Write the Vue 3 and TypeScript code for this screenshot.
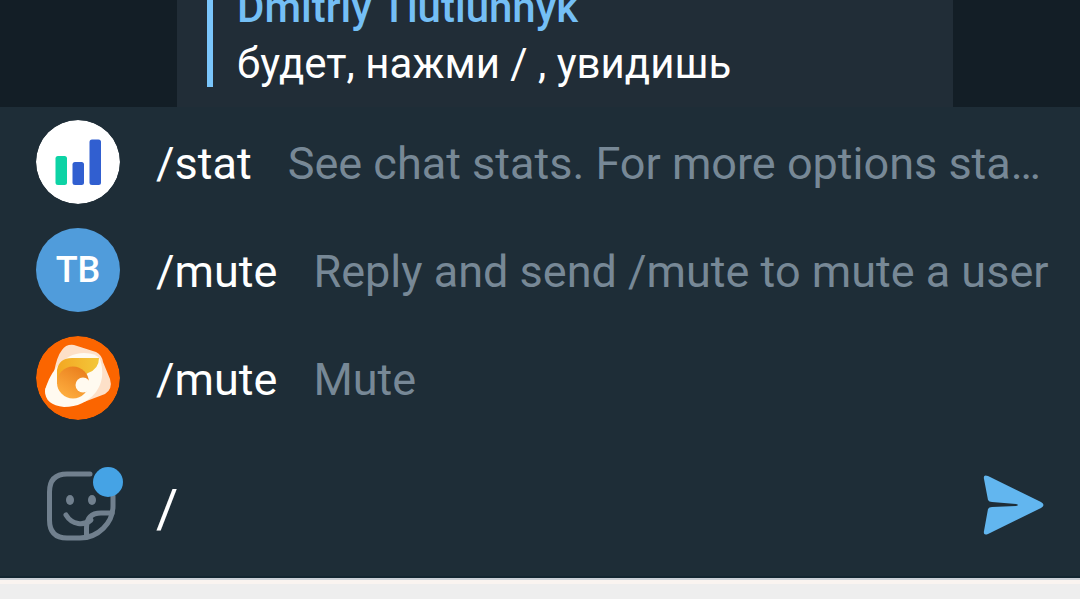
<script setup lang="ts">
import { ref } from 'vue'

interface Suggestion {
  id: number
  avatar: 'stats' | 'initials' | 'flame'
  command: string
  description: string
}

const suggestions: Suggestion[] = [
  { id: 1, avatar: 'stats', command: '/stat', description: 'See chat stats. For more options sta…' },
  { id: 2, avatar: 'initials', command: '/mute', description: 'Reply and send /mute to mute a user' },
  { id: 3, avatar: 'flame', command: '/mute', description: 'Mute' },
]

const draft = ref('/')

function pick(item: Suggestion) {
  draft.value = item.command
}
</script>

<template>
  <main class="chat">
    <section class="history">
      <article class="bubble">
        <blockquote class="quote">
          <strong class="author">Dmitriy Tiutiunnyk</strong>
          <p class="quote-text">будет, нажми / , увидишь</p>
        </blockquote>
      </article>
    </section>

    <ul class="suggestions">
      <li v-for="item in suggestions" :key="item.id">
        <button class="suggestion" type="button" @click="pick(item)">
          <svg v-if="item.avatar === 'stats'" class="avatar" viewBox="0 0 84 84" aria-hidden="true">
            <circle cx="42" cy="42" r="42" fill="#fff" />
            <rect x="19.5" y="36" width="11.5" height="29" rx="2.5" fill="#0dd3a5" />
            <rect x="36.5" y="42" width="11.5" height="23" rx="2.5" fill="#315fd0" />
            <rect x="53.5" y="19.5" width="11.5" height="45.5" rx="2.5" fill="#315fd0" />
          </svg>
          <span v-else-if="item.avatar === 'initials'" class="avatar initials">TB</span>
          <svg v-else class="avatar" viewBox="0 0 84 84" aria-hidden="true">
            <defs>
              <linearGradient id="orb" x1="0.8" y1="0" x2="0.2" y2="1">
                <stop offset="0" stop-color="#e97d1c" />
                <stop offset="1" stop-color="#ffb040" />
              </linearGradient>
              <linearGradient id="wing" x1="0" y1="0" x2="1" y2="0">
                <stop offset="0" stop-color="#f3a722" />
                <stop offset="1" stop-color="#f3c73a" />
              </linearGradient>
            </defs>
            <circle cx="42" cy="42" r="42" fill="#fb6500" />
            <path d="M26 14Q30 8 38 9L60 16Q66 19 67 26L74 43Q77 53 69 58L48 66L24 68Q9 65 9 53L18 36Q21 20 26 14Z" fill="#fde0c8" />
            <path d="M20 32Q32 17 48 17Q60 17 64 23Q70 42 60 56Q48 71 28 71Q9 69 9 55Q12 42 20 32Z" fill="#fffaf0" />
            <path d="M21 48V34Q23 22 36 22H63Q63 33 52 37L36 48Z" fill="url(#wing)" />
            <circle cx="37" cy="46.5" r="16" fill="url(#orb)" />
            <circle cx="47" cy="49" r="7.5" fill="#fffaf0" />
          </svg>
          <span class="command">{{ item.command }}</span>
          <span class="description">{{ item.description }}</span>
        </button>
      </li>
    </ul>

    <form class="composer" @submit.prevent>
      <button class="icon-button" type="button" aria-label="Stickers">
        <svg class="sticker" viewBox="0 0 84 84" aria-hidden="true">
          <g fill="none" stroke="#71808e" stroke-width="5" stroke-linecap="round" stroke-linejoin="round">
            <path d="M54 11H31Q13.5 11 13.5 29V57Q13.5 75 31 75H44C62 75 77 60 77 43V33" />
            <path d="M30 52C36 62 48 63 55 57" />
            <path d="M50.5 74V65Q50.5 50 65 50H76" />
          </g>
          <ellipse cx="34" cy="37" rx="4" ry="5" fill="#71808e" />
          <ellipse cx="56" cy="37" rx="4" ry="5" fill="#71808e" />
          <circle cx="72" cy="19" r="15" fill="#45a3e5" />
        </svg>
      </button>
      <input v-model="draft" class="field" type="text" aria-label="Message" />
      <button class="icon-button" type="submit" aria-label="Send">
        <svg class="send" viewBox="0 0 60 60" aria-hidden="true">
          <path
            d="M0 4Q-1 -1 4 1L57 27Q62 30 57 33L4 59Q-1 61 0 56L4 34Q5 32 8 32L32 31Q36 30 32 29L8 27Q5 27 4 25Z"
            fill="#62b6ef"
          />
        </svg>
      </button>
    </form>

    <footer class="system-bar"></footer>
  </main>
</template>

<style>
body {
  margin: 0;
  background: #eeeeee;
}
</style>

<style scoped>
.chat {
  display: flex;
  flex-direction: column;
  min-height: 100vh;
  background: #1e2d37;
  color: #ffffff;
  font-family: Roboto, "Noto Sans", sans-serif;
}

.history {
  display: flex;
  align-items: flex-end;
  height: 107px;
  overflow: hidden;
  padding: 0 127px 0 177px;
  background: #131e26;
}

.bubble {
  flex: 1;
  padding: 0 30px 20px;
  background: #212d37;
}

.quote {
  margin: 0;
  padding-left: 24px;
  border-left: 6px solid #7ac5fb;
  font-size: 42px;
  line-height: 56px;
  white-space: nowrap;
}

.author {
  display: block;
  color: #74bff5;
  font-weight: 500;
}

.quote-text {
  margin: 0;
  padding-top: 5px;
  line-height: 46px;
}

.suggestions {
  margin: 0;
  padding: 0;
  list-style: none;
}

.suggestion {
  display: flex;
  align-items: center;
  width: 100%;
  height: 108px;
  padding: 2px 28px 0 36px;
  border: 0;
  background: none;
  color: inherit;
  font: inherit;
  font-size: 45px;
  line-height: 56px;
  text-align: left;
  cursor: pointer;
}

.avatar {
  flex: none;
  width: 84px;
  height: 84px;
  border-radius: 50%;
}

.initials {
  background: #509cdb;
  font-size: 36px;
  font-weight: 500;
  line-height: 84px;
  text-align: center;
}

.command,
.description {
  padding: 4px 0 0 36px;
}

.description {
  flex: 1;
  min-width: 0;
  overflow: hidden;
  color: #778896;
  text-overflow: ellipsis;
  white-space: nowrap;
}

.composer {
  display: flex;
  flex: 1;
  align-items: center;
  padding: 2px 36px 0;
}

.icon-button {
  display: flex;
  padding: 0;
  border: 0;
  background: none;
  cursor: pointer;
}

.sticker {
  width: 84px;
  height: 84px;
  overflow: visible;
}

.send {
  width: 60px;
  height: 60px;
  overflow: visible;
}

.field {
  flex: 1;
  min-width: 0;
  padding: 8px 36px 0;
  border: 0;
  outline: 0;
  background: none;
  color: inherit;
  font: inherit;
  font-size: 54px;
  line-height: 64px;
}

.system-bar {
  height: 21px;
  border-top: 2px solid #142631;
  box-shadow: inset 0 2px #cbd0d7, inset 0 6px #faf4f0;
  background: #eeeeee;
}
</style>
